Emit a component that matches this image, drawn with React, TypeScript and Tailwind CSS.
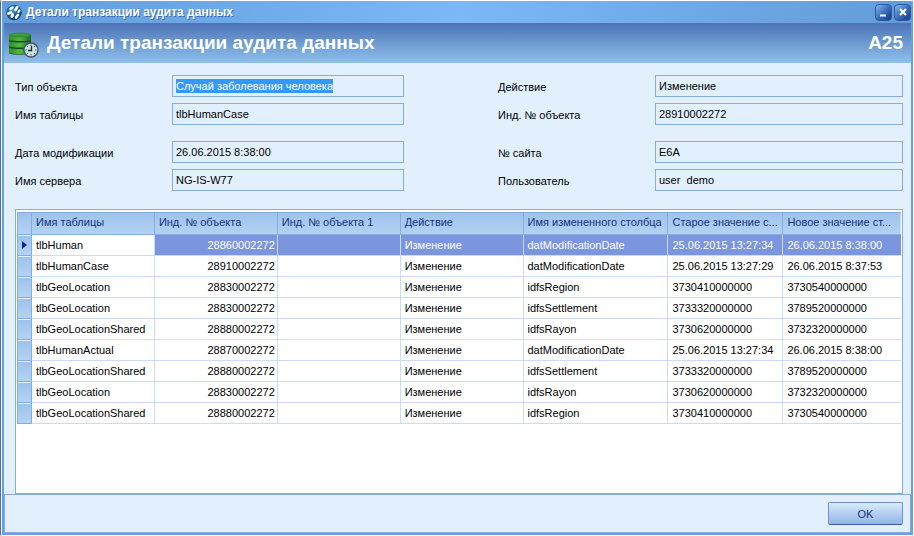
import React from "react";

type Row = [string, string, string, string, string, string];

const rows: Row[] = [
  ["tlbHuman", "28860002272", "Изменение", "datModificationDate", "25.06.2015 13:27:34", "26.06.2015 8:38:00"],
  ["tlbHumanCase", "28910002272", "Изменение", "datModificationDate", "25.06.2015 13:27:29", "26.06.2015 8:37:53"],
  ["tlbGeoLocation", "28830002272", "Изменение", "idfsRegion", "3730410000000", "3730540000000"],
  ["tlbGeoLocation", "28830002272", "Изменение", "idfsSettlement", "3733320000000", "3789520000000"],
  ["tlbGeoLocationShared", "28880002272", "Изменение", "idfsRayon", "3730620000000", "3732320000000"],
  ["tlbHumanActual", "28870002272", "Изменение", "datModificationDate", "25.06.2015 13:27:34", "26.06.2015 8:38:00"],
  ["tlbGeoLocationShared", "28880002272", "Изменение", "idfsSettlement", "3733320000000", "3789520000000"],
  ["tlbGeoLocation", "28830002272", "Изменение", "idfsRayon", "3730620000000", "3732320000000"],
  ["tlbGeoLocationShared", "28880002272", "Изменение", "idfsRegion", "3730410000000", "3730540000000"],
];

const headers = [
  "Имя таблицы",
  "Инд. № объекта",
  "Инд. № объекта 1",
  "Действие",
  "Имя измененного столбца",
  "Старое значение с...",
  "Новое значение ст...",
];

function Field({ id, label, value, selected }: { id: string; label: string; value: string; selected?: boolean }) {
  return (
    <div className="flex h-[22px] items-center">
      <label htmlFor={id} className="w-[157px] shrink-0 pt-px">
        {label}
      </label>
      <div className="flex h-full min-w-0 flex-1 items-center border border-[#86ace2] bg-[#e2f0fe] px-[3px]">
        <input
          id={id}
          readOnly
          defaultValue={value}
          className={
            selected
              ? "field-sizing-content h-[14px] bg-[#3399ff] text-white outline-none"
              : "h-[14px] w-full bg-transparent outline-none"
          }
        />
      </div>
    </div>
  );
}

function GlobeIcon() {
  return (
    <svg width="16" height="17" viewBox="0 0 16 17" aria-hidden="true">
      <defs>
        <radialGradient id="globe" cx="0.4" cy="0.35">
          <stop offset="0" stopColor="#3fa3d2" />
          <stop offset="1" stopColor="#11497f" />
        </radialGradient>
      </defs>
      <circle cx="8" cy="8.5" r="7.8" fill="url(#globe)" />
      <g stroke="#fff" strokeLinecap="round" fill="none">
        <path d="M2.300 9.500l2.700-1" strokeWidth="2.600" />
        <path d="M4.500 5l2-1.500" strokeWidth="2.400" />
        <path d="M9.500 6l1.800-3" strokeWidth="2.600" />
        <path d="M6 12.500l0.500-2" strokeWidth="3" />
        <path d="M10 13.500l2-2.500" strokeWidth="2.600" />
        <path d="M12.500 8l1-1.500" strokeWidth="2.200" />
      </g>
    </svg>
  );
}

function DatabaseClockIcon() {
  return (
    <svg className="mt-1" width="31" height="27" viewBox="0 0 31 27" aria-hidden="true">
      <defs>
        <linearGradient id="disk" x1="0" x2="1">
          <stop offset="0" stopColor="#2f8f2c" />
          <stop offset="0.5" stopColor="#4fb944" />
          <stop offset="1" stopColor="#1f6a22" />
        </linearGradient>
      </defs>
      <path d="M0 3v18c0 2.300 22 2.300 22 0V3z" fill="#1c4a26" />
      <path
        d="M0 3v4.500c0 2 22 2 22 0V3zM0 9v5c0 2 22 2 22 0V9c0 2-22 2-22 0zM0 15.500v5c0 2.300 22 2.300 22 0v-5c0 2-22 2-22 0z"
        fill="url(#disk)"
      />
      <ellipse cx="11" cy="3" rx="11" ry="2" fill="#3f9a3a" stroke="#2d7f2c" strokeWidth="0.5" />
      <circle cx="22" cy="18" r="7" fill="#c6e4e6" stroke="#46555a" strokeWidth="1.300" />
      <path
        d="M22 12.500V14M22 22v1.500M16.500 18H18M26 18h1.500M18.100 14.100l1 1M25.900 14.100l-1 1M18.100 21.900l1-1M25.900 21.900l-1-1"
        stroke="#46555a"
      />
      <path d="M22.500 14v4.500H19" fill="none" stroke="#1d272b" strokeWidth="1.300" />
    </svg>
  );
}

const captionButton =
  "flex size-[17px] items-center justify-center rounded-sm border border-[#2c5aa0] bg-linear-to-br from-[#86b8e8] via-[#3f70ba] to-[#15368c]";

export default function App() {
  return (
    <div className="flex min-h-screen flex-col border-t border-r border-b border-l border-white border-l-[#4a6eb4] bg-white pl-px font-['Liberation_Sans',Arial,sans-serif] text-[11px] leading-[14px] text-black">
      <div className="flex flex-1 flex-col border-r-2 border-b-2 border-l-2 border-[#689fdd]">
        <div className="flex h-[22px] items-center bg-linear-to-r from-[#639cd8] from-0% via-[#7ab8f8] via-50% to-[#639cd8] to-100% pl-[2px]">
          <GlobeIcon />
          <span className="ml-1 flex-1 text-[12px] font-bold text-white [text-shadow:1px_1px_0_#3f6bb0]">
            Детали транзакции аудита данных
          </span>
          <div className="flex gap-[2px]">
            <button type="button" aria-label="Свернуть" className={captionButton}>
              <svg width="10" height="10" viewBox="0 0 10 10">
                <path d="M1 8.500h6" stroke="#fff" strokeWidth="2" />
              </svg>
            </button>
            <button type="button" aria-label="Закрыть" className={captionButton}>
              <svg width="10" height="10" viewBox="0 0 10 10">
                <path d="M2 2l6 6M8 2l-6 6" stroke="#fff" strokeWidth="2" />
              </svg>
            </button>
          </div>
        </div>

        <header className="flex h-10 items-center bg-linear-to-b from-[#4d74b6] to-[#8fc1ec] pr-2 pl-[5px] text-[19px] leading-6 font-bold text-white">
          <DatabaseClockIcon />
          <h1 className="ml-[7px] flex-1">Детали транзакции аудита данных</h1>
          <span>A25</span>
        </header>

        <main className="flex flex-1 flex-col bg-[#e2f0fe] pt-3">
          <div className="flex gap-[94px] pr-2 pl-[11px]">
            <div className="flex flex-[389] flex-col gap-4">
              <div className="flex flex-col gap-[6px]">
                <Field id="objectType" label="Тип объекта" value="Случай заболевания человека" selected />
                <Field id="tableName" label="Имя таблицы" value="tlbHumanCase" />
              </div>
              <div className="flex flex-col gap-[6px]">
                <Field id="modified" label="Дата модификации" value="26.06.2015 8:38:00" />
                <Field id="server" label="Имя сервера" value="NG-IS-W77" />
              </div>
            </div>
            <div className="flex flex-[405] flex-col gap-4">
              <div className="flex flex-col gap-[6px]">
                <Field id="action" label="Действие" value="Изменение" />
                <Field id="objectId" label="Инд. № объекта" value="28910002272" />
              </div>
              <div className="flex flex-col gap-[6px]">
                <Field id="site" label="№ сайта" value="E6A" />
                <Field id="user" label="Пользователь" value="user  demo" />
              </div>
            </div>
          </div>

          <div className="mt-[18px] mr-2 ml-[11px] flex-1 border border-[#86ace2] bg-white pt-[2px] pr-px pl-px">
            <table className="w-full table-fixed border-separate border-spacing-0">
              <colgroup>
                <col className="w-[15px]" />
                <col className="w-[13.9%]" />
                <col className="w-[13.9%]" />
                <col className="w-[13.9%]" />
                <col className="w-[13.9%]" />
                <col className="w-[16.4%]" />
                <col className="w-[13%]" />
                <col />
              </colgroup>
              <thead>
                <tr className="h-[23px] bg-linear-to-b from-[#9cc2ec] to-[#b4d3f2] text-[#15317e]">
                  <th className="border border-[#86ace2]" aria-label="Текущая строка" />
                  {headers.map((h) => (
                    <th
                      key={h}
                      className="border-t border-r border-b border-[#86ace2] pb-[3px] pl-1 text-left font-normal whitespace-nowrap last:border-r-0"
                    >
                      {h}
                    </th>
                  ))}
                </tr>
              </thead>
              <tbody>
                {rows.map(([table, id, action, column, oldValue, newValue], i) => {
                  const active = i === 0;
                  const cell = active
                    ? "truncate border-r border-b border-[#cadcf5] bg-[#7b96de] px-1 text-white"
                    : "truncate border-r border-b border-[#cadcf5] px-1";
                  return (
                    <tr key={i} className="h-[21px]">
                      <td className="border-r border-b border-l border-[#86ace2] bg-linear-to-b from-[#9cc2ec] to-[#b4d3f2] p-0 shadow-[inset_0_1px_0_#e2f0fe]">
                        {active && (
                          <svg className="mx-auto" width="5" height="8" viewBox="0 0 5 8" aria-hidden="true">
                            <path d="M0 0l5 4-5 4z" fill="#0d2b85" />
                          </svg>
                        )}
                      </td>
                      <td className="truncate border-r border-b border-[#cadcf5] px-1">{table}</td>
                      <td className={cell + " pr-[2px] text-right"}>{id}</td>
                      <td className={cell} />
                      <td className={cell}>{action}</td>
                      <td className={cell}>{column}</td>
                      <td className={cell}>{oldValue}</td>
                      <td className={cell + " border-r-0"}>{newValue}</td>
                    </tr>
                  );
                })}
              </tbody>
            </table>
          </div>
        </main>

        <footer className="flex h-[39px] items-center justify-end border border-[#86ace2] bg-[#e2f0fe] pr-[7px]">
          <button
            type="button"
            className="h-[23px] w-[75px] rounded-[2px] border border-[#6f93d2] border-b-[#4358a8] bg-linear-to-b from-[#dcebfb] via-[#b3cff1] to-[#93b6e6] text-[#15317e]"
          >
            OK
          </button>
        </footer>
      </div>
    </div>
  );
}
